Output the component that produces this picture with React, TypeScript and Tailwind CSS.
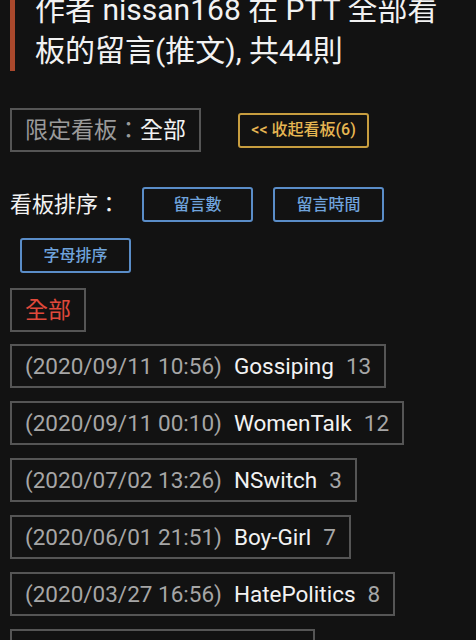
import React from 'react';

type BoardRow = { time: string; board: string; count: number };

const rows: BoardRow[] = [
    { time: '2020/09/11 10:56', board: 'Gossiping', count: 13 },
    { time: '2020/09/11 00:10', board: 'WomenTalk', count: 12 },
    { time: '2020/07/02 13:26', board: 'NSwitch', count: 3 },
    { time: '2020/06/01 21:51', board: 'Boy-Girl', count: 7 },
    { time: '2020/03/27 16:56', board: 'HatePolitics', count: 8 },
    { time: '2020/02/14 09:32', board: 'joke', count: 1 },
];

const sortButtons = ['留言數', '留言時間', '字母排序'];

const App: React.FC = () => {
    return (
        <div className="min-h-screen overflow-hidden bg-[#121212] px-[10px] pb-6 font-[Roboto,'Noto_Sans_CJK_TC',sans-serif] text-[#f2f2f2]">
            <h1 className="-mt-[11px] border-l-[5px] border-[#a9482c] pl-5 text-[30px] font-normal leading-[41px]">
                作者 nissan168 在 PTT 全部看板的留言(推文), 共44則
            </h1>

            <div className="mt-[37px] flex items-center">
                <div className="flex h-[44px] items-center border-2 border-[#555] px-[13px] text-[23px] leading-none">
                    <span className="text-[#9a9a9a]">限定看板：</span>
                    <span className="text-[#f2f2f2]">全部</span>
                </div>
                <button className="ml-[37px] flex h-[35px] w-[131px] items-center justify-center rounded-[3px] border-2 border-[#c79d3f] text-[16px] font-medium text-[#e6b652]">
                    &lt;&lt; 收起看板(6)
                </button>
            </div>

            <div className="mt-[27px] flex flex-wrap items-center">
                <span className="my-2 mr-3 text-[22px] leading-[35px]">看板排序：</span>
                {sortButtons.map(label => (
                    <button
                        key={label}
                        className="mx-[10px] my-2 flex h-[35px] w-[111px] items-center justify-center rounded-[3px] border-2 border-[#5a8dc8] text-[16px] font-medium text-[#6fa3dc]"
                    >
                        {label}
                    </button>
                ))}
            </div>

            <div className="mt-[7px] flex">
                <div className="flex h-[44px] items-center border-2 border-[#555] px-[13px] text-[23px] leading-none text-[#e0493b]">
                    全部
                </div>
            </div>

            <div className="mt-[12px] flex flex-col items-start gap-[13px]">
                {rows.map(row => (
                    <div
                        key={row.board}
                        className="flex h-[44px] items-center gap-3 border-2 border-[#555] px-[13px] text-[22.5px] leading-none"
                    >
                        <span className="text-[#a6a6a6]">({row.time})</span>
                        <span className="text-[#f2f2f2]">{row.board}</span>
                        <span className="text-[#a6a6a6]">{row.count}</span>
                    </div>
                ))}
            </div>
        </div>
    );
};

export default App;
